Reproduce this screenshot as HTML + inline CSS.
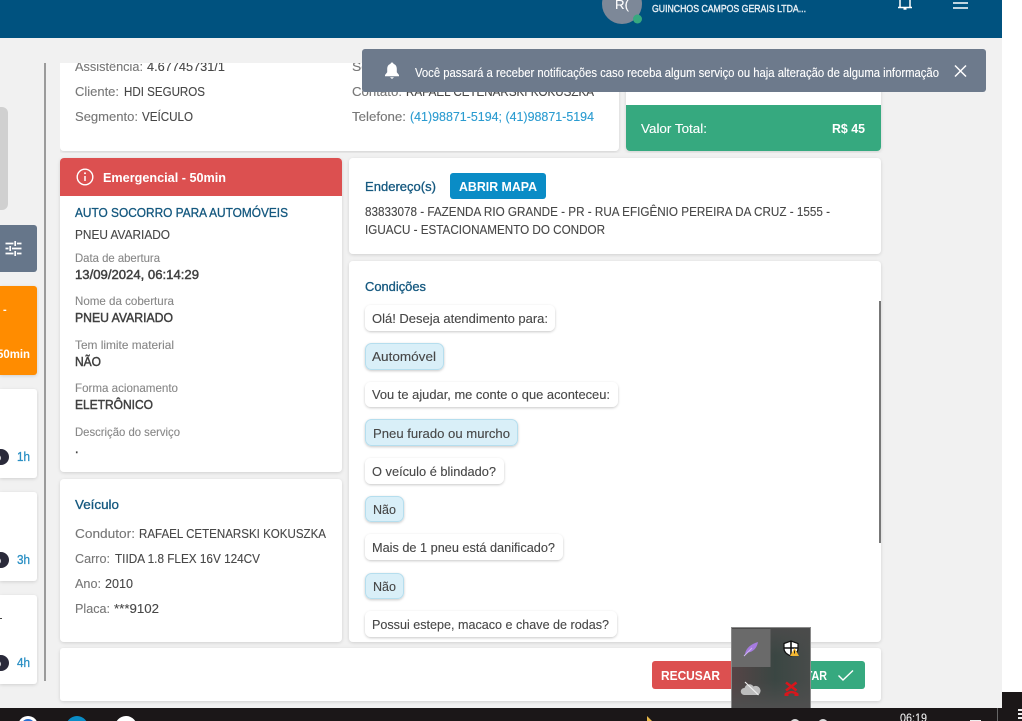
<!DOCTYPE html>
<html lang="pt-BR"><head><meta charset="utf-8"><title>Atendimento</title>
<style>
html,body{margin:0;padding:0;background:#fff;width:1022px;height:721px;overflow:hidden}
svg{display:block}
text{font-family:"Liberation Sans",sans-serif;font-size:13px;fill:#474747;stroke:#474747;stroke-width:.12px}
.l{fill:#777;stroke:#777}
.s{font-size:12px;fill:#888;stroke:#888}
.b{fill:#404040;stroke:#404040;stroke-width:.45px;font-size:12.5px}
.h{fill:#14587f;stroke:#14587f;stroke-width:.3px}
.w{fill:#fff;stroke:#fff}
.wb{fill:#fff;stroke:none;font-weight:bold}
.a{fill:#2a9bd0;stroke:#2a9bd0}
.g{fill:#e4edf3;stroke:#e4edf3;stroke-width:.4px;font-size:10.5px}
</style></head><body>
<svg xmlns="http://www.w3.org/2000/svg" width="1022" height="721" viewBox="0 0 1022 721">
<defs>
<filter id="sh" x="-5%" y="-5%" width="110%" height="115%"><feDropShadow dx="0" dy="1" stdDeviation="1.500" flood-color="#000" flood-opacity=".14"/></filter>
<filter id="bs" x="-10%" y="-20%" width="120%" height="150%"><feDropShadow dx="0" dy="1" stdDeviation="1.300" flood-color="#000" flood-opacity=".22"/></filter>
<clipPath id="ctop"><rect x="60" y="63" width="830" height="90"/></clipPath>
<clipPath id="cl"><rect x="0" y="40" width="38" height="660"/></clipPath>
<linearGradient id="fly" x1="0" y1="0" x2="1" y2="0"><stop offset="0" stop-color="#5b4144"/><stop offset=".55" stop-color="#33443f"/><stop offset="1" stop-color="#474c4a"/></linearGradient>
<linearGradient id="flyv" x1="0" y1="0" x2="0" y2="1"><stop offset="0" stop-color="#4b4b4b"/><stop offset=".35" stop-color="#4b4b4b" stop-opacity=".3"/><stop offset=".65" stop-color="#4b4b4b" stop-opacity=".3"/><stop offset="1" stop-color="#4f4f4f"/></linearGradient>
</defs>

<rect width="1022" height="721" fill="#fff"/>
<rect width="1002" height="708" fill="#f1f1f1"/>

<!-- header -->
<rect width="1002" height="38" fill="#00527f"/>
<circle cx="622" cy="4" r="20" fill="#7d8898"/>
<text x="615" y="9" class="w" textLength="14" lengthAdjust="spacingAndGlyphs">R(</text>
<circle cx="637.500" cy="19" r="4.500" fill="#36a97f"/>
<text x="652" y="12" class="g" textLength="154" lengthAdjust="spacingAndGlyphs">GUINCHOS CAMPOS GERAIS LTDA...</text>
<path d="M898 7.500h14M900 7.500V-2M910 7.500V-2M903.500 9h3" stroke="#fff" stroke-width="1.500" fill="none"/>
<path d="M953 3h15M953 8h15" stroke="#fff" stroke-width="1.600"/>

<!-- left column -->
<path d="M0 107h2a6 6 0 0 1 6 6v91a6 6 0 0 1-6 6H0z" fill="#d0d0d0"/>
<path d="M0 225h34a3 3 0 0 1 3 3v41a3 3 0 0 1-3 3H0z" fill="#66768a"/>
<path d="M5.500 243.500h8M17 243.500h4.500M5.500 248.500h3M12 248.500h9.500M5.500 253.500h8M17 253.500h4.500M15.200 241v5M10.200 246v5M15.200 251v5" stroke="#fff" stroke-width="1.700" fill="none"/>
<g filter="url(#sh)">
<path d="M0 286h34a3 3 0 0 1 3 3v83a3 3 0 0 1-3 3H0z" fill="#ff8c00"/>
<path d="M0 389h34a3 3 0 0 1 3 3v83a3 3 0 0 1-3 3H0z" fill="#fff"/>
<path d="M0 492h34a3 3 0 0 1 3 3v83a3 3 0 0 1-3 3H0z" fill="#fff"/>
<path d="M0 595h34a3 3 0 0 1 3 3v83a3 3 0 0 1-3 3H0z" fill="#fff"/>
</g>
<g clip-path="url(#cl)">
<text x="3" y="313" class="wb" style="font-size:11px">-</text>
<text x="-3" y="358" class="wb" style="font-size:12px" textLength="33" lengthAdjust="spacingAndGlyphs">50min</text>
<circle cx="1" cy="457" r="8" fill="#2a2a3a"/><circle cx="1" cy="560" r="8" fill="#2a2a3a"/><circle cx="1" cy="663" r="8" fill="#2a2a3a"/>
<text x="-5" y="461" class="w" style="font-size:11px">o</text><text x="-5" y="564" class="w" style="font-size:11px">o</text><text x="-5" y="667" class="w" style="font-size:11px">o</text>
<text x="17" y="461" class="a" style="font-size:12.500px;fill:#2a8fc4;stroke:#2a8fc4;stroke-width:.3px" textLength="13" lengthAdjust="spacingAndGlyphs">1h</text>
<text x="17" y="564" class="a" style="font-size:12.500px;fill:#2a8fc4;stroke:#2a8fc4;stroke-width:.3px" textLength="13" lengthAdjust="spacingAndGlyphs">3h</text>
<text x="17" y="667" class="a" style="font-size:12.500px;fill:#2a8fc4;stroke:#2a8fc4;stroke-width:.3px" textLength="13" lengthAdjust="spacingAndGlyphs">4h</text>
<rect x="0" y="618" width="2" height="1" fill="#444"/>
</g>
<rect x="44" y="63" width="2" height="618" fill="#9b9b9b"/>

<!-- top card -->
<g clip-path="url(#ctop)">
<rect x="60" y="40" width="559" height="111" rx="4" fill="#fff" filter="url(#sh)"/>
<rect x="626" y="40" width="255" height="111" rx="4" fill="#fff" filter="url(#sh)"/>
<path d="M626 105h255v42a4 4 0 0 1-4 4H630a4 4 0 0 1-4-4z" fill="#36a97f"/>
<text x="75" y="71" class="l" textLength="68" lengthAdjust="spacingAndGlyphs">Assistência:</text>
<text x="147" y="71" textLength="78" lengthAdjust="spacingAndGlyphs">4.67745731/1</text>
<text x="352" y="71" class="l" textLength="50" lengthAdjust="spacingAndGlyphs">Serviço:</text>
</g>
<text x="75" y="96" class="l" textLength="44" lengthAdjust="spacingAndGlyphs">Cliente:</text>
<text x="124" y="96" textLength="81" lengthAdjust="spacingAndGlyphs">HDI SEGUROS</text>
<text x="75" y="121" class="l" textLength="63" lengthAdjust="spacingAndGlyphs">Segmento:</text>
<text x="142" y="121" textLength="51" lengthAdjust="spacingAndGlyphs">VEÍCULO</text>
<text x="352" y="96" class="l" textLength="50" lengthAdjust="spacingAndGlyphs">Contato:</text>
<text x="406" y="96" textLength="188" lengthAdjust="spacingAndGlyphs">RAFAEL CETENARSKI KOKUSZKA</text>
<text x="352" y="121" class="l" textLength="54" lengthAdjust="spacingAndGlyphs">Telefone:</text>
<text x="410" y="121" class="a" textLength="184" lengthAdjust="spacingAndGlyphs">(41)98871-5194; (41)98871-5194</text>
<text x="641" y="133" class="w" textLength="66" lengthAdjust="spacingAndGlyphs">Valor Total:</text>
<text x="832" y="133" class="wb" textLength="33" lengthAdjust="spacingAndGlyphs">R$ 45</text>

<!-- toast -->
<rect x="362" y="49" width="624" height="43" rx="3" fill="#6d7a8c"/>
<path d="M392 62.500c-.9 0-1.500.6-1.500 1.400-2.300.7-3.300 2.700-3.300 5v3.300l-2.200 2.800v1.300h14v-1.300l-2.200-2.800v-3.300c0-2.300-1-4.300-3.300-5 0-.8-.6-1.400-1.500-1.400z" fill="#fff"/>
<path d="M390 77.300h4l-2 1.700z" fill="#fff"/>
<text x="415" y="77" class="w" style="font-size:12.500px" textLength="524" lengthAdjust="spacingAndGlyphs">Você passará a receber notificações caso receba algum serviço ou haja alteração de alguma informação</text>
<path d="M955 65.500l11 11M966 65.500l-11 11" stroke="#fff" stroke-width="1.500"/>

<!-- emergency card -->
<rect x="60" y="158" width="282" height="314" rx="4" fill="#fff" filter="url(#sh)"/>
<path d="M60 162a4 4 0 0 1 4-4h274a4 4 0 0 1 4 4v34H60z" fill="#dc5050"/>
<circle cx="85" cy="177" r="7.800" fill="none" stroke="#fff" stroke-width="1.400"/>
<path d="M85 176v5" stroke="#fff" stroke-width="1.500"/><circle cx="85" cy="173.300" r="1" fill="#fff"/>
<text x="103" y="182" class="wb" textLength="123" lengthAdjust="spacingAndGlyphs">Emergencial - 50min</text>
<text x="75" y="217" class="h" style="font-size:12.500px" textLength="213" lengthAdjust="spacingAndGlyphs">AUTO SOCORRO PARA AUTOMÓVEIS</text>
<text x="75" y="239" textLength="95" lengthAdjust="spacingAndGlyphs">PNEU AVARIADO</text>
<text x="75" y="262" class="s" textLength="85" lengthAdjust="spacingAndGlyphs">Data de abertura</text>
<text x="75" y="279" class="b" textLength="124" lengthAdjust="spacingAndGlyphs">13/09/2024, 06:14:29</text>
<text x="75" y="305" class="s" textLength="99" lengthAdjust="spacingAndGlyphs">Nome da cobertura</text>
<text x="75" y="322" class="b" textLength="98" lengthAdjust="spacingAndGlyphs">PNEU AVARIADO</text>
<text x="75" y="349" class="s" textLength="99" lengthAdjust="spacingAndGlyphs">Tem limite material</text>
<text x="75" y="366" class="b" textLength="26" lengthAdjust="spacingAndGlyphs">NÃO</text>
<text x="75" y="392" class="s" textLength="103" lengthAdjust="spacingAndGlyphs">Forma acionamento</text>
<text x="75" y="409" class="b" textLength="78" lengthAdjust="spacingAndGlyphs">ELETRÔNICO</text>
<text x="75" y="436" class="s" textLength="105" lengthAdjust="spacingAndGlyphs">Descrição do serviço</text>
<text x="75" y="453" class="b">.</text>

<!-- vehicle card -->
<rect x="60" y="479" width="282" height="163" rx="4" fill="#fff" filter="url(#sh)"/>
<text x="75" y="509" class="h" textLength="44" lengthAdjust="spacingAndGlyphs">Veículo</text>
<text x="75" y="538" class="l" textLength="60" lengthAdjust="spacingAndGlyphs">Condutor:</text>
<text x="139" y="538" textLength="187" lengthAdjust="spacingAndGlyphs">RAFAEL CETENARSKI KOKUSZKA</text>
<text x="75" y="563" class="l" textLength="35" lengthAdjust="spacingAndGlyphs">Carro:</text>
<text x="115" y="563" textLength="145" lengthAdjust="spacingAndGlyphs">TIIDA 1.8 FLEX 16V 124CV</text>
<text x="75" y="588" class="l" textLength="26" lengthAdjust="spacingAndGlyphs">Ano:</text>
<text x="105" y="588" textLength="28" lengthAdjust="spacingAndGlyphs">2010</text>
<text x="75" y="613" class="l" textLength="35" lengthAdjust="spacingAndGlyphs">Placa:</text>
<text x="114" y="613" textLength="45" lengthAdjust="spacingAndGlyphs">***9102</text>

<!-- address -->
<rect x="349" y="158" width="532" height="96" rx="4" fill="#fff" filter="url(#sh)"/>
<text x="365" y="191" class="h" textLength="71" lengthAdjust="spacingAndGlyphs">Endereço(s)</text>
<rect x="450" y="173" width="96" height="26" rx="3" fill="#0a8cc6"/>
<text x="459" y="191" class="wb" textLength="78" lengthAdjust="spacingAndGlyphs">ABRIR MAPA</text>
<text x="365" y="216" textLength="465" lengthAdjust="spacingAndGlyphs">83833078 - FAZENDA RIO GRANDE - PR - RUA EFIGÊNIO PEREIRA DA CRUZ - 1555 -</text>
<text x="365" y="234" textLength="240" lengthAdjust="spacingAndGlyphs">IGUACU - ESTACIONAMENTO DO CONDOR</text>

<!-- conditions -->
<rect x="349" y="261" width="532" height="381" rx="4" fill="#fff" filter="url(#sh)"/>
<text x="365" y="291" class="h" textLength="61" lengthAdjust="spacingAndGlyphs">Condições</text>
<rect x="879" y="301" width="2" height="242" fill="#777"/>
<g filter="url(#bs)" fill="#fff">
<rect x="365" y="305" width="190" height="26" rx="6"/>
<rect x="365" y="382" width="253" height="25" rx="6"/>
<rect x="365" y="458" width="139" height="26" rx="6"/>
<rect x="365" y="534" width="198" height="26" rx="6"/>
<rect x="365" y="611" width="252" height="26" rx="6"/>
</g>
<g filter="url(#bs)" fill="#d9eff8" stroke="#b5deee">
<rect x="365.500" y="343.500" width="78" height="26" rx="6"/>
<rect x="365.500" y="419.500" width="152" height="26" rx="6"/>
<rect x="365.500" y="496.500" width="38" height="25" rx="6"/>
<rect x="365.500" y="573.500" width="38" height="25" rx="6"/>
</g>
<text x="372" y="323" textLength="176" lengthAdjust="spacingAndGlyphs">Olá! Deseja atendimento para:</text>
<text x="372" y="361" textLength="64" lengthAdjust="spacingAndGlyphs">Automóvel</text>
<text x="372" y="399" textLength="238" lengthAdjust="spacingAndGlyphs">Vou te ajudar, me conte o que aconteceu:</text>
<text x="373" y="438" textLength="137" lengthAdjust="spacingAndGlyphs">Pneu furado ou murcho</text>
<text x="372" y="476" textLength="124" lengthAdjust="spacingAndGlyphs">O veículo é blindado?</text>
<text x="373" y="514" textLength="23" lengthAdjust="spacingAndGlyphs">Não</text>
<text x="372" y="552" textLength="183" lengthAdjust="spacingAndGlyphs">Mais de 1 pneu está danificado?</text>
<text x="373" y="591" textLength="23" lengthAdjust="spacingAndGlyphs">Não</text>
<text x="372" y="629" textLength="237" lengthAdjust="spacingAndGlyphs">Possui estepe, macaco e chave de rodas?</text>

<!-- action bar -->
<rect x="60" y="648" width="821" height="53" rx="3" fill="#fff" filter="url(#sh)"/>
<rect x="652" y="661" width="90" height="28" rx="3" fill="#dc5050"/>
<text x="661" y="680" class="wb" textLength="59" lengthAdjust="spacingAndGlyphs">RECUSAR</text>
<rect x="770" y="661" width="95" height="28" rx="3" fill="#36a97f"/>
<text x="780" y="680" class="wb" textLength="47" lengthAdjust="spacingAndGlyphs">ACEITAR</text>
<path d="M838.500 675.500l4.500 4.500 10-9.500" stroke="#fff" stroke-width="1.400" fill="none"/>

<!-- taskbar -->
<rect x="0" y="708" width="1002" height="13" fill="#1b1718"/>
<rect x="1002" y="692" width="20" height="29" fill="#1b1718"/>
<circle cx="28" cy="726" r="10" fill="#fff"/><circle cx="28" cy="726" r="7" fill="#2a6fd0"/>
<circle cx="77" cy="727" r="11" fill="#0a8cc6"/><circle cx="77" cy="727" r="5" fill="#0a6c96"/>
<circle cx="126" cy="727" r="11" fill="#fff"/><circle cx="126" cy="727" r="6" fill="#dff0e4"/>
<path d="M647 716l5 5h-5z" fill="#e8b84a"/>
<circle cx="795" cy="724" r="5" fill="#ddd"/><circle cx="823" cy="724" r="5" fill="#ddd"/>
<text x="900" y="722" class="w" style="font-size:12px;fill:#eee;stroke:#eee" textLength="27" lengthAdjust="spacingAndGlyphs">06:19</text>
<rect x="970" y="720" width="11" height="1" fill="#eee"/>
<rect x="997" y="708" width="1" height="13" fill="#666"/>
<path d="M1018 710h4M1018 714h4M1018 718h4" stroke="#eee" stroke-width="2"/>

<!-- tray flyout -->
<rect x="731" y="627" width="80" height="81" fill="url(#fly)"/>
<rect x="731" y="627" width="80" height="81" fill="url(#flyv)"/>
<path d="M731.500 708V627.500h79V708" fill="none" stroke="#8a8a8a"/>
<rect x="732" y="629" width="38.500" height="38" fill="#6a6a6a"/>
<path d="M745 654c1-6 6-10 13-12-1 6-5 10-10 10.500z" fill="#a67be0"/>
<path d="M744 656l8-8" stroke="#d0b5f5" stroke-width="1"/>
<path d="M784 643.500l7-2.500 7 2.500v5c0 3.500-3 6-7 7.500-4-1.500-7-4-7-7.500z" fill="#fff" stroke="#111" stroke-width="1.200"/>
<path d="M791 641.500v14M784.500 648h13" stroke="#111" stroke-width="1.600"/>
<path d="M790 656l4.500-8 4.500 8z" fill="#f2b632"/>
<path d="M794.500 650.500v3" stroke="#222" stroke-width="1"/>
<path d="M744 695a3.500 3.500 0 0 1 .5-7 5 5 0 0 1 9-1.500 4.500 4.500 0 0 1 4.500 8.500z" fill="#bdbdbd"/>
<path d="M745 682l13.500 13" stroke="#f0f0f0" stroke-width="1.200"/>
<path d="M786 682.500l10.500 8M796.500 682.500l-10.500 8" stroke="#d8161c" stroke-width="2.600"/>
<path d="M784.500 696v-2.500q7-5 14 0v2.500h-4v-2q-3-1.500-6 0v2z" fill="#d8161c"/>
</svg>
</body></html>
